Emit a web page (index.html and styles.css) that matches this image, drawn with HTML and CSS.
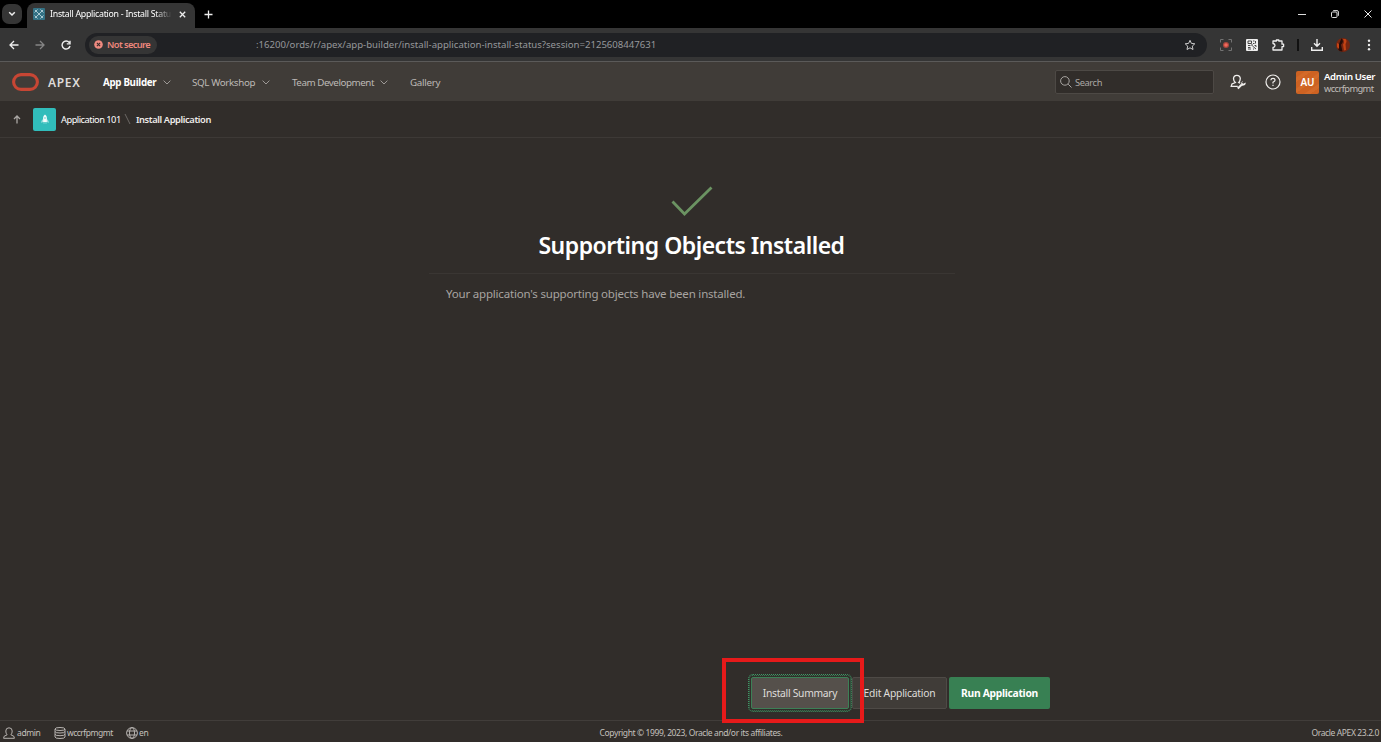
FILE: index.html
```html
<!DOCTYPE html>
<html lang="en">
<head>
<meta charset="utf-8">
<title>Install Application - Install Status</title>
<link rel="stylesheet" href="styles.css">
</head>
<body>
<div class="tabstrip">
  <div class="tab-search"><svg width="8" height="6" viewBox="0 0 8 6"><path d="M1.2 1.2 4 4l2.800-2.800" fill="none" stroke="#eee" stroke-width="1.500"/></svg></div>
  <div class="tab">
    <svg class="favicon" width="12" height="12" viewBox="0 0 12 12"><rect width="12" height="12" rx="1" fill="#337184"/><path d="M2 2l8 8M10 2L2 10M1.500 4.500l3-3M7.500 10.500l3-3M7.500 1.500l3 3M1.500 7.500l3 3" stroke="#b7d3da" stroke-width=".9"/></svg>
    <span class="tab-title">Install Application - Install Statu</span>
    <svg class="tab-close" width="7" height="7" viewBox="0 0 7 7"><path d="M.8.8l5.400 5.400M6.200.8L.8 6.200" stroke="#eee" stroke-width="1.300"/></svg>
  </div>
  <svg class="new-tab" width="9" height="9" viewBox="0 0 9 9"><path d="M4.500.5v8M.5 4.500h8" stroke="#eee" stroke-width="1.300"/></svg>
  <div class="window-controls">
    <svg width="8" height="8" viewBox="0 0 8 8"><path d="M0 4.500h8" stroke="#ddd"/></svg>
    <svg width="8" height="8" viewBox="0 0 8 8" fill="none" stroke="#ddd"><rect x=".5" y="2" width="5.500" height="5.500" rx="1"/><path d="M2.200.6H6q1.400 0 1.400 1.400v3.800"/></svg>
    <svg width="8" height="8" viewBox="0 0 8 8"><path d="M.5.5l7 7M7.500.5l-7 7" stroke="#eee"/></svg>
  </div>
</div>
<div class="toolbar">
  <svg class="nav-icon" width="10" height="10" viewBox="0 0 10 10"><path d="M9.500 5H1M5 1L1 5l4 4" fill="none" stroke="#eee" stroke-width="1.300"/></svg>
  <svg class="nav-icon" width="10" height="10" viewBox="0 0 10 10"><path d="M.5 5H9M5 1l4 4-4 4" fill="none" stroke="#858585" stroke-width="1.300"/></svg>
  <svg class="nav-icon" width="10" height="10" viewBox="0 0 10 10"><path d="M8.300 2.600A4 4 0 1 0 9 6M9 .7v3.200H5.800" fill="none" stroke="#eee" stroke-width="1.400"/></svg>
  <div class="address">
    <div class="secure"><svg width="9" height="9" viewBox="0 0 9 9"><circle cx="4.500" cy="4.500" r="4.300" fill="#ef8a80"/><path d="M2.900 2.900l3.200 3.200M6.100 2.900L2.900 6.100" stroke="#3c2c2a" stroke-width="1.100"/></svg><span class="secure-text">Not secure</span></div>
    <span class="url">:16200/ords/r/apex/app-builder/install-application-install-status?session=2125608447631</span>
    <svg class="star" width="12" height="12" viewBox="0 0 12 12"><path d="M6 1.300l1.400 3.100 3.400.4-2.500 2.300.7 3.400L6 8.800l-3 1.700.7-3.400-2.500-2.300 3.400-.4z" fill="none" stroke="#ccc"/></svg>
  </div>
  <div class="extensions">
    <svg width="12" height="12" viewBox="0 0 12 12"><path d="M.5 3.500v-3h3M8.500.5h3v3M11.500 8.500v3h-3M3.500 11.500h-3v-3" fill="none" stroke="#737373"/><circle cx="6" cy="6" r="3" fill="#a8473e"/><circle cx="6" cy="6" r="1.800" fill="#f0685b"/></svg>
    <svg width="12" height="12" viewBox="0 0 12 12"><rect width="12" height="12" rx="1" fill="#eee"/><path d="M2 2h3.500v2.500H2zM7 2h1.500M9.500 2v2.500M7 4.500h1.500M2 6.500h2.500M5 6h2M6.500 7l3.500 3M8.500 6.500H10V8M2 8.500h2.500M2 10h3M7 10h1" fill="none" stroke="#333" stroke-width=".9"/></svg>
    <svg width="13" height="12" viewBox="0 0 13 12"><path d="M1 2h3.400V1h2.400v1H10v3.200h1.600v2.400H10V11H1V8.500q2-.2 2-2t-2-2z" fill="none" stroke="#eee" stroke-width="1.300" stroke-linejoin="round"/></svg>
    <i class="divider"></i>
    <svg width="12" height="12" viewBox="0 0 12 12"><path d="M6 0v7M3 4.300l3 3 3-3M.7 8v3.200h10.600V8" fill="none" stroke="#eee" stroke-width="1.400"/></svg>
    <svg class="profile" width="14" height="14" viewBox="0 0 14 14"><circle cx="7" cy="7" r="7" fill="#742611"/><path d="M5.500.2q3 3-.5 6.500l1.500 6.800Q3 13.500 2 11l1-5z" fill="#250d08"/><path d="M7 1q2 3 0 5.500l1 6 2-.5-.5-6q2-3 0-5M1 5l2 1v5L1 9z" fill="#c34314"/></svg>
    <svg class="more" width="4" height="12" viewBox="0 0 4 12" fill="#eee"><circle cx="2" cy="1.700" r="1.200"/><circle cx="2" cy="6" r="1.200"/><circle cx="2" cy="10.300" r="1.200"/></svg>
  </div>
</div>
<header class="header">
  <svg class="oracle" width="27" height="18" viewBox="0 0 27 18"><rect x="1.600" y="1.600" width="23.800" height="14.800" rx="7.400" fill="none" stroke="#c74634" stroke-width="3.100"/></svg>
  <span class="brand">APEX</span>
  <nav class="menu">
    <div class="item item-builder"><span class="active">App Builder</span><svg width="8" height="5" viewBox="0 0 8 5"><path d="M.6.6L4 4 7.400.6"/></svg></div>
    <div class="item item-sql"><span class="sql">SQL Workshop</span><svg width="8" height="5" viewBox="0 0 8 5"><path d="M.6.6L4 4 7.400.6"/></svg></div>
    <div class="item item-team"><span class="team">Team Development</span><svg width="8" height="5" viewBox="0 0 8 5"><path d="M.6.6L4 4 7.400.6"/></svg></div>
    <div class="item"><span class="gallery">Gallery</span></div>
  </nav>
  <div class="search"><svg width="12" height="12" viewBox="0 0 12 12"><path d="M8.200 8.200l3.300 3.300" stroke="#aaa7a4"/><circle cx="4.900" cy="4.900" r="4.300" fill="none" stroke="#aaa7a4"/></svg><span class="search-text">Search</span></div>
  <svg class="admin-icon" width="16" height="16" viewBox="0 0 16 16" fill="none" stroke="#f1efed" stroke-width="1.300"><path d="M7.800 12.300H1.200l.8-2.400 3.300-1.300Q3.500 7 3.500 4.600 3.700 1.300 6.900 1.300t3.400 3.300Q10.300 7 8.700 8.600l1.500.6"/><path d="M7.800 14.500l4-4" stroke-width="2"/><path d="M13 6.800l-1 1.900 1.200 1.100 2.500-1.300q.3 3.300-3.900 3.200-1.700-2.900 1.200-4.900z" fill="#f1efed" stroke="none"/></svg>
  <svg class="help-icon" width="16" height="16" viewBox="0 0 16 16" fill="none" stroke="#f1efed" stroke-width="1.200"><circle cx="8" cy="8" r="7"/><path d="M5.900 6.300Q6 4.400 8 4.400t2.100 1.700Q10.100 7.200 8 8.200v1.300M8 10.700v1.300"/></svg>
  <div class="avatar"><span class="initials">AU</span></div>
  <div class="user"><span class="user-name">Admin User</span><span class="workspace">wccrfpmgmt</span></div>
</header>
<div class="breadcrumb">
  <svg class="up" width="8" height="9" viewBox="0 0 8 9"><path d="M4 8.500V1M1 4l3-3 3 3" fill="none" stroke="#aaa7a4" stroke-width="1.300"/></svg>
  <div class="app-icon"><svg width="8" height="10" viewBox="0 0 8 10" fill="#fff"><path d="M4 .5q1.900 1.300 1.900 3.500v4H2.100V4Q2.100 1.800 4 .5z" opacity=".95"/><path d="M1.800 5v3L.5 9V7zM6.200 5v3l1.300 1V7zM2.500 8.300h1v1.200h-1zM4.500 8.300h1v1.200h-1z" opacity=".65"/><circle cx="4" cy="4" r=".7" fill="#31bdbb"/></svg></div>
  <span class="crumb">Application 101</span>
  <svg class="slash" width="7" height="12" viewBox="0 0 7 12"><path d="M1 1l5 10" stroke="#6c6865"/></svg>
  <span class="crumb-current">Install Application</span>
</div>
<main class="main">
  <svg class="check" width="42" height="30" viewBox="0 0 42 30"><path d="M1.500 15.500L13.500 28 40.500 1.500" fill="none" stroke="#6b9362" stroke-width="2.800"/></svg>
  <h1 class="title">Supporting Objects Installed</h1>
  <div class="message"><span class="message-text">Your application's supporting objects have been installed.</span></div>
  <div class="actions">
    <div class="button summary"><span class="summary-text">Install Summary</span></div>
    <div class="button edit"><span class="edit-text">Edit Application</span></div>
    <div class="button run"><span class="run-text">Run Application</span></div>
    <div class="highlight"></div>
  </div>
</main>
<footer class="footer">
  <div class="status">
    <svg width="12" height="12" viewBox="0 0 12 12"><path d="M.6 11.300l.5-2 3-1.500Q2.800 6.500 2.800 4q0-3.200 3.200-3.200T9.200 4q0 2.500-1.300 3.800l3 1.500.5 2z"/></svg><span class="f-admin">admin</span>
    <svg width="12" height="12" viewBox="0 0 12 12"><ellipse cx="6" cy="2" rx="5" ry="1.500"/><path d="M1 2v8q0 1.500 5 1.500t5-1.500V2M1 4.500Q1 6 6 6t5-1.500M1 7.200q0 1.500 5 1.500t5-1.500"/></svg><span class="f-workspace">wccrfpmgmt</span>
    <svg width="12" height="12" viewBox="0 0 12 12"><circle cx="6" cy="6" r="5.400"/><ellipse cx="6" cy="6" rx="2.500" ry="5.400"/><path d="M1 4h10M1 8h10"/></svg><span class="f-lang">en</span>
  </div>
  <span class="copyright">Copyright © 1999, 2023, Oracle and/or its affiliates.</span>
  <span class="version">Oracle APEX 23.2.0</span>
</footer>
</body>
</html>
```
FILE: styles.css
```css
* { box-sizing: border-box; }
body { margin: 0; width: 1381px; height: 742px; overflow: hidden; display: flex; flex-direction: column; background: #312d2a; color: #fff; font: 9.300px/14px "Noto Sans", "Open Sans", sans-serif; }
svg { display: block; flex: none; }
span { white-space: nowrap; flex: none; }
.tabstrip { height: 28px; flex: none; display: flex; align-items: center; background: #000; }
.tab-search { width: 20px; height: 20px; margin-left: 2px; border-radius: 7px; background: #353535; display: flex; align-items: center; justify-content: center; }
.tab { width: 168px; height: 25px; margin: 3px 0 0 5px; padding: 0 8px 3px 6px; border-radius: 8px 8px 0 0; background: #353535; display: flex; align-items: center; }
.tab-title { width: 122px; margin-left: 5px; font-size: 8.800px; letter-spacing: -.27px; -webkit-mask-image: linear-gradient(90deg, #000 86%, transparent); mask-image: linear-gradient(90deg, #000 86%, transparent); }
.tab-close { margin-left: 7px; }
.new-tab { margin-left: 9px; }
.window-controls { display: flex; gap: 25px; margin-left: auto; margin-right: 9px; }
.toolbar { height: 34px; flex: none; display: flex; align-items: center; padding-left: 9px; background: #353535; border-bottom: 1px solid #5b5a59; }
.nav-icon { margin-right: 16px; }
.address { width: 1122px; height: 24px; margin-left: -2px; padding-left: 4px; border-radius: 12px; background: #202124; display: flex; align-items: center; }
.secure { width: 68px; height: 18px; padding-left: 5px; border-radius: 9px; background: #353535; display: flex; align-items: center; gap: 4px; color: #ee867c; }
.secure-text { font-size: 9.300px; font-weight: 600; letter-spacing: -.6px; }
.url { margin-left: 99px; color: #96989b; font-size: 9.600px; }
.star { margin-left: auto; margin-right: 11px; }
.extensions { flex: 1; display: flex; align-items: center; gap: 14px; padding-left: 13px; }
.divider { width: 2px; height: 12px; margin: 0 -2px 0 -2px; background: #111; }
.profile { margin-left: -1px; }
.more { margin-left: 3px; }
.header { height: 39px; flex: none; display: flex; align-items: center; background: #403c38; padding: 1px 6px 0 12px; }
.brand { width: 33px; margin-left: 9px; padding-top: 1px; font-size: 12px; font-weight: 600; letter-spacing: .7px; color: #dedbd9; }
.menu { display: flex; margin-left: 22px; padding-top: 1px; font-size: 9.800px; }
.item { display: flex; align-items: center; justify-content: space-between; color: #bdb9b6; }
.item svg { fill: none; stroke: #9e9a97; }
.item-builder { width: 68px; margin-right: 21px; }
.item-sql { width: 78px; margin-right: 22px; }
.item-team { width: 96px; margin-right: 22px; }
.active { color: #fff; font-weight: 700; letter-spacing: -.32px; }
.sql { letter-spacing: -.37px; }
.team { letter-spacing: -.45px; }
.gallery { letter-spacing: -.3px; }
.search { width: 159px; height: 24px; margin-left: auto; padding-left: 4px; display: flex; align-items: center; gap: 3px; background: #312d2a; border: 1px solid #4d4945; border-radius: 2px; color: #aaa7a4; }
.search-text { padding-top: 1px; letter-spacing: -.4px; }
.admin-icon { margin-left: 16px; }
.help-icon { margin-left: 19px; }
.avatar { width: 23px; height: 23px; margin-left: 15px; border-radius: 2px; background: repeating-linear-gradient(145deg, #cd6222 0 5px, #d36a29 6px 9px); display: flex; align-items: center; justify-content: center; font-size: 10px; font-weight: 600; }
.user { width: 51px; margin-left: 5px; padding-top: 1px; display: flex; flex-direction: column; }
.user span { line-height: 12px; }
.user-name { font-size: 9.600px; font-weight: 600; letter-spacing: -.37px; }
.workspace { color: #c0bcb9; letter-spacing: -.6px; }
.breadcrumb { height: 37px; flex: none; display: flex; align-items: center; padding-left: 13px; border-bottom: 1px solid #3d3936; }
.app-icon { width: 23px; height: 23px; margin-left: 12px; border-radius: 2px; background: #31bdbb; display: flex; align-items: center; justify-content: center; }
.crumb { width: 59px; margin-left: 5px; padding-top: 2px; letter-spacing: -.51px; }
.slash { margin: 0 4px; }
.crumb-current { font-weight: 600; margin-left: 1px; padding-top: 2px; color: #eeebe9; letter-spacing: -.38px; }
.main { flex: 1; display: flex; flex-direction: column; align-items: center; padding-top: 48px; }
.check { margin-left: 2px; }
.title { margin: 13px 0 0 2px; height: 32px; font-size: 23px; line-height: 32px; font-weight: 600; letter-spacing: -.5px; white-space: nowrap; }
.message { width: 526px; margin: 12px 0 0 3px; padding: 11px 17px; border-top: 1px solid #3a3633; color: #a8a4a1; font-size: 11.500px; line-height: 17px; letter-spacing: -.19px; }
.actions { position: relative; width: 300px; height: 32px; margin: auto 0 11px 419px; display: flex; }
.button { flex: none; height: 32px; display: flex; align-items: center; justify-content: center; border-radius: 2px; font-size: 10.300px; }
.summary { position: relative; width: 98px; margin: 0 3px 0 1px; background: #55504b; border: 1px solid #3c8056; outline: 1px dotted #3f9866; outline-offset: 2px; color: #dfdcda; letter-spacing: -.29px; }
.summary::after { content: ""; position: absolute; inset: -3px; border: 1px dotted #377853; border-radius: 3px; }
.edit { width: 95px; margin-right: 2px; background: #403c38; border: 1px solid #4e4a46; color: #dfdcda; letter-spacing: -.22px; }
.run { width: 101px; background: #388053; font-weight: 700; letter-spacing: -.29px; }
.highlight { position: absolute; left: -28px; top: -19px; width: 142px; height: 65px; border: 4px solid #e61a1a; }
.footer { height: 22px; flex: none; display: grid; grid-template-columns: 1fr auto 1fr; align-items: center; border-top: 1px solid #413d3a; padding: 2px 2px 0 3px; color: #c4c0bd; font-size: 8.500px; letter-spacing: -.39px; }
.status { display: flex; align-items: center; }
.status svg { fill: none; stroke: #b6b2af; }
.f-admin { width: 23px; margin: 0 14px 0 2px; }
.f-workspace { width: 46px; margin: 0 13px 0 1px; letter-spacing: -.5px; }
.f-lang { margin-left: 1px; }
.version { justify-self: end; }
```
